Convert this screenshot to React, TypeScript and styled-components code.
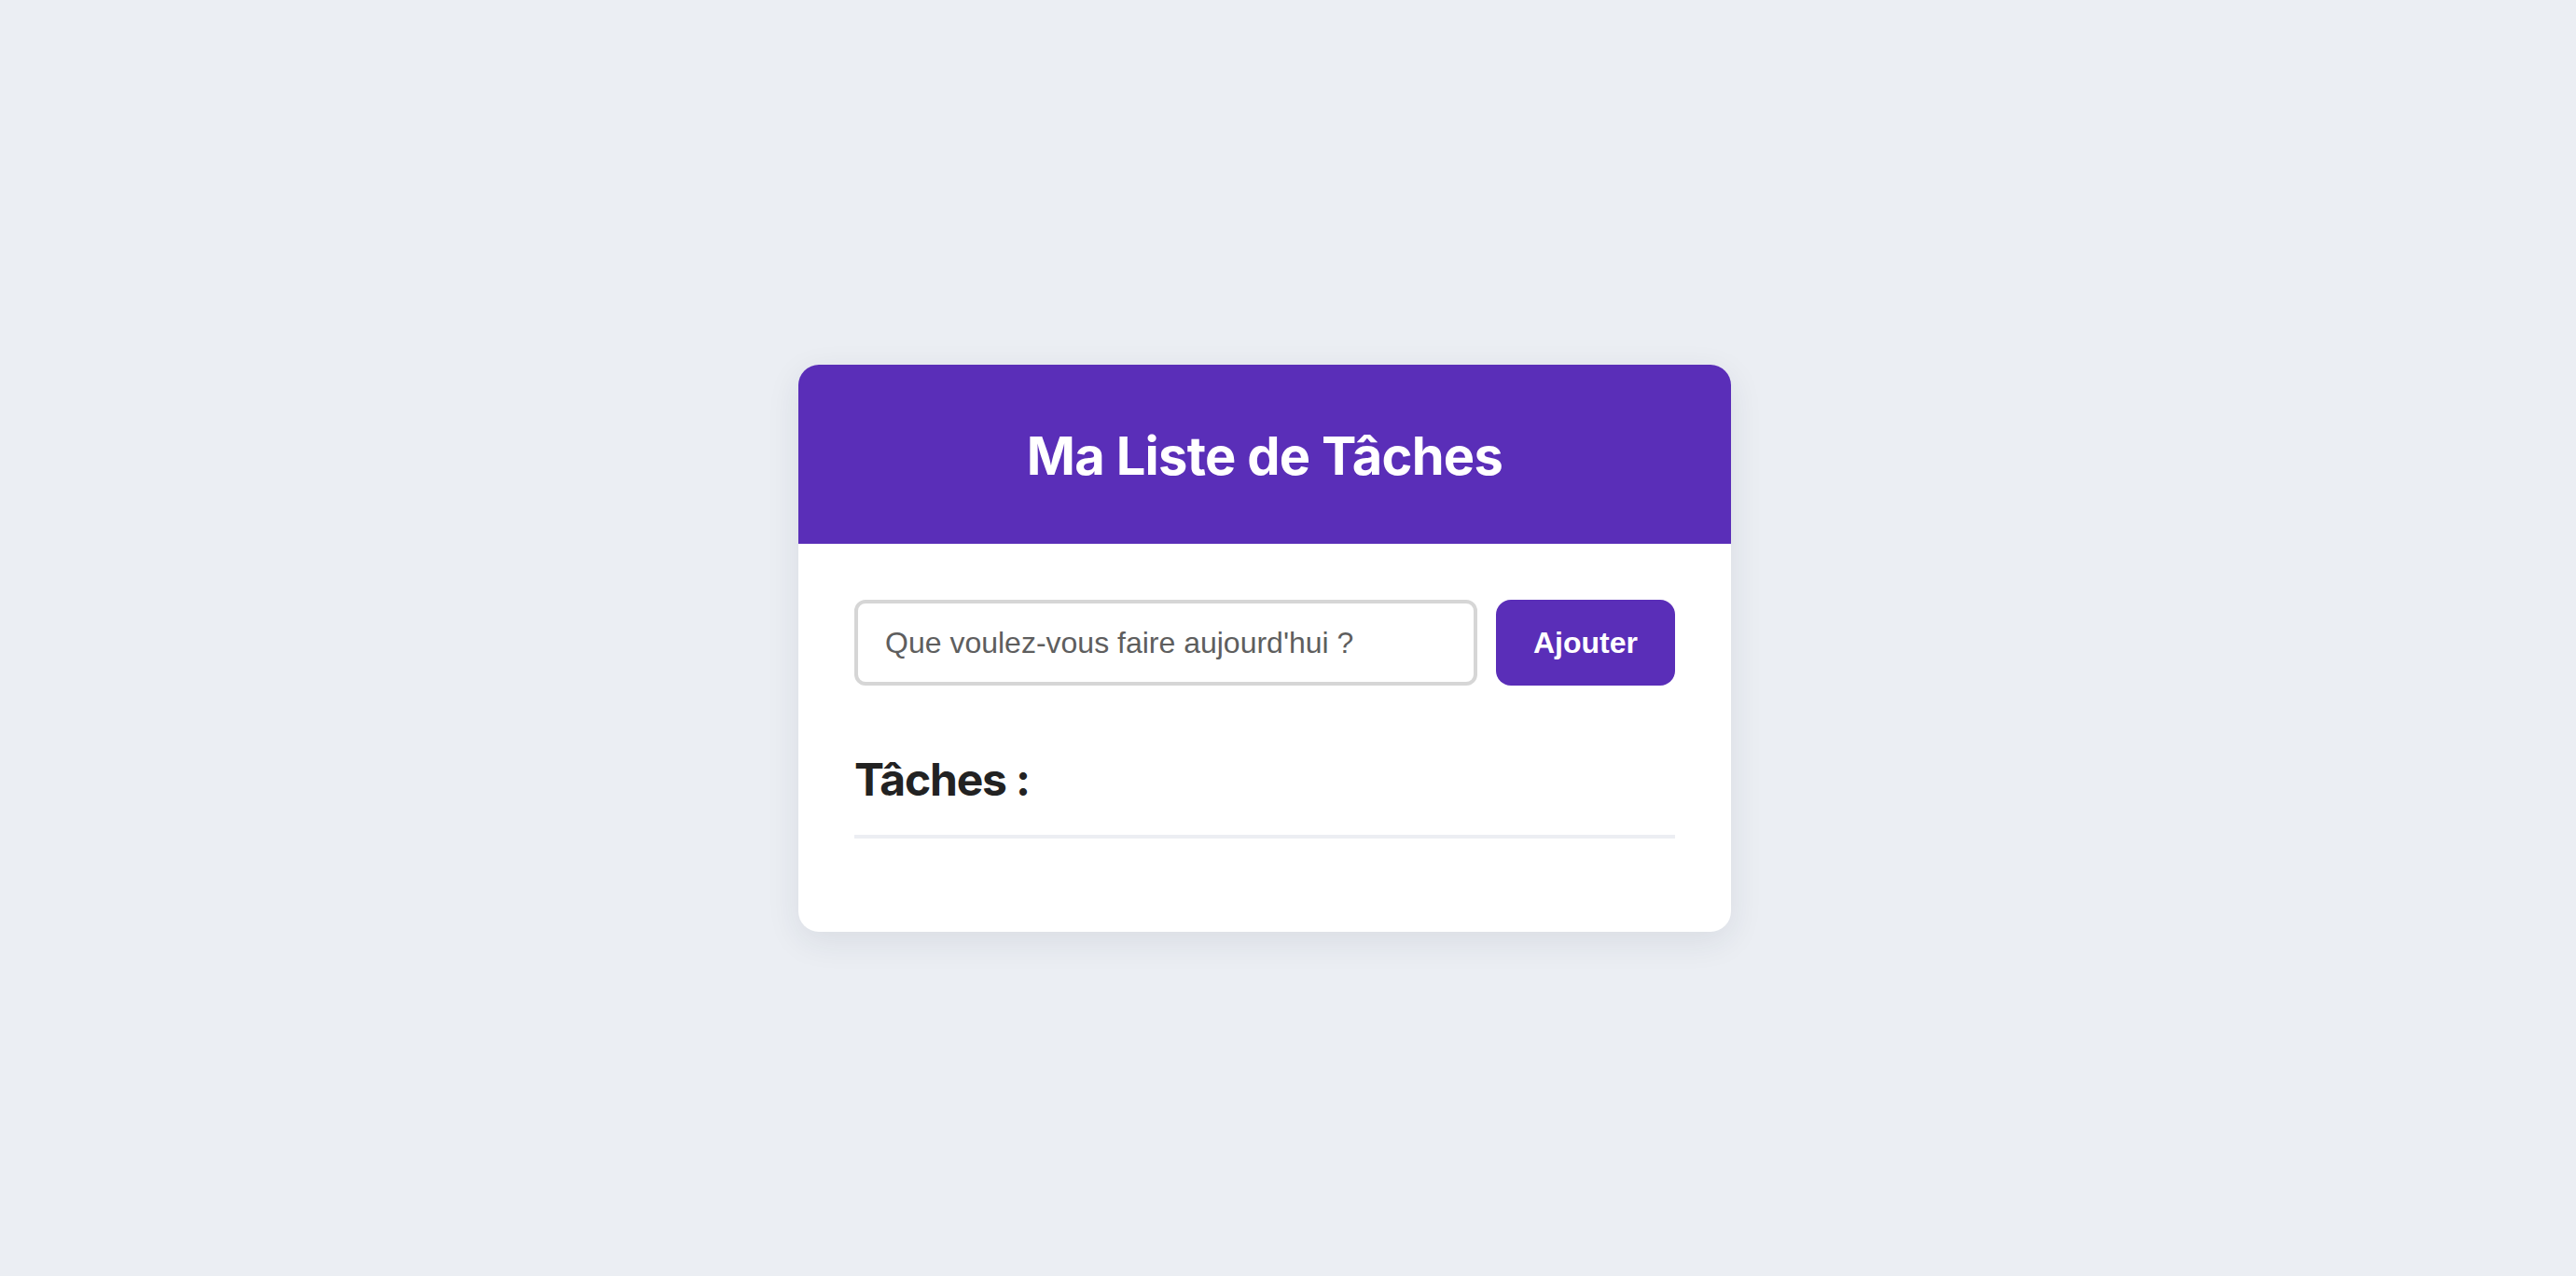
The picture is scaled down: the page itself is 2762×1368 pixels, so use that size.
import React, { useState } from "react";
import styled, { createGlobalStyle } from "styled-components";

const GlobalStyle = createGlobalStyle`
  html, body {
    margin: 0;
    padding: 0;
    background: #ebeef3;
  }
  * { box-sizing: border-box; }
`;

const Page = styled.div`
  min-height: 100vh;
  display: flex;
  justify-content: center;
  align-items: center;
  padding: 22px 50px 0 0;
  background: #ebeef3;
`;

const Card = styled.div`
  width: 1000px;
  background: #ffffff;
  border-radius: 22px;
  overflow: hidden;
  box-shadow: 0 10px 36px rgba(30, 40, 70, 0.09);
`;

const Header = styled.header`
  background: #5a2eb8;
  padding: 64px 0 60px;
  text-align: center;
`;

const Title = styled.h1`
  margin: 0;
  font-family: Inter, "Noto Sans", sans-serif;
  font-weight: 700;
  font-size: 56px;
  line-height: 68px;
  color: #ffffff;
  letter-spacing: -0.7px;
`;

const Body = styled.div`
  padding: 60px 60px 60px;
`;

const Row = styled.form`
  display: flex;
  gap: 20px;
  margin: 0 0 72px;
`;

const Input = styled.input`
  flex: 1;
  height: 92px;
  border: 4px solid #d6d6d6;
  border-radius: 12px;
  padding: 0 29px;
  font-family: "Liberation Sans", Arial, sans-serif;
  font-size: 32px;
  color: #222;
  outline: none;
  background: #fff;
  &::placeholder {
    color: #5e5e5e;
  }
`;

const Button = styled.button`
  width: 192px;
  height: 92px;
  border: none;
  border-radius: 16px;
  background: #5a2eb8;
  color: #ffffff;
  font-family: "Liberation Sans", Arial, sans-serif;
  font-weight: 700;
  font-size: 32px;
  cursor: pointer;
`;

const SectionTitle = styled.h2`
  margin: 0;
  padding-bottom: 30px;
  border-bottom: 4px solid #eceef3;
  font-family: Inter, "Noto Sans", sans-serif;
  font-weight: 700;
  font-size: 48px;
  line-height: 58px;
  color: #222222;
  letter-spacing: -1.2px;
`;

const List = styled.ul`
  list-style: none;
  margin: 0;
  padding: 0;
  min-height: 40px;
`;

export default function App() {
  const [value, setValue] = useState("");
  const [tasks, setTasks] = useState<string[]>([]);
  return (
    <>
      <GlobalStyle />
      <Page>
        <Card>
          <Header>
            <Title>Ma Liste de Tâches</Title>
          </Header>
          <Body>
            <Row
              onSubmit={(e) => {
                e.preventDefault();
                if (value.trim()) {
                  setTasks([...tasks, value.trim()]);
                  setValue("");
                }
              }}
            >
              <Input
                placeholder="Que voulez-vous faire aujourd'hui ?"
                value={value}
                onChange={(e) => setValue(e.target.value)}
              />
              <Button type="submit">Ajouter</Button>
            </Row>
            <SectionTitle>Tâches :</SectionTitle>
            <List>
              {tasks.map((t, i) => (
                <li key={i}>{t}</li>
              ))}
            </List>
          </Body>
        </Card>
      </Page>
    </>
  );
}
